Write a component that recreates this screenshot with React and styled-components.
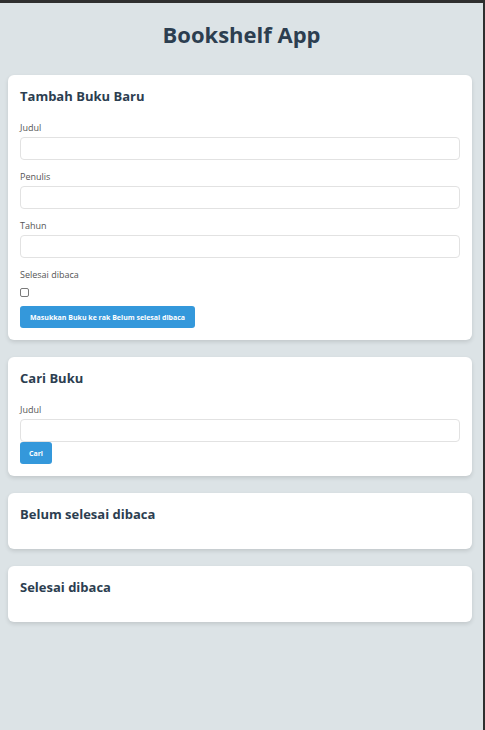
import React from "react";
import styled, { createGlobalStyle } from "styled-components";

const Global = createGlobalStyle`
  html, body {
    margin: 0;
    padding: 0;
    background: #2f2f2f;
  }
  body {
    font-family: "Open Sans", "Noto Sans", "Liberation Sans", sans-serif;
  }
`;

const Frame = styled.div`
  min-height: 100vh;
  box-sizing: border-box;
  border-top: 3px solid #2f2f2f;
  border-right: 2px solid #2f2f2f;
  background: #dce3e6;
`;

const Header = styled.header`
  padding-top: 16px;
  margin-bottom: 26px;
`;

const AppTitle = styled.h1`
  margin: 0;
  text-align: center;
  font-size: 22px;
  line-height: 30px;
  font-weight: 700;
  color: #2c3e50;
`;

const Main = styled.main`
  display: flex;
  flex-direction: column;
  gap: 17px;
  padding: 0 11px 24px 8px;
`;

const Card = styled.section`
  background: #ffffff;
  border-radius: 6px;
  padding: 12px;
  box-shadow: 0 2px 4px rgba(0, 0, 0, 0.12);
`;

const CardTitle = styled.h2`
  margin: 0 0 ${(p) => (p.$compact ? "14px" : "16px")};
  font-size: 13px;
  line-height: 18px;
  font-weight: 700;
  color: #2c3e50;
`;

const Field = styled.div`
  margin-bottom: ${(p) => p.$gap ?? 10}px;
`;

const Label = styled.label`
  display: block;
  font-size: 9px;
  line-height: 13px;
  margin-bottom: 3px;
  color: #555;
`;

const TextInput = styled.input`
  display: block;
  width: 100%;
  box-sizing: border-box;
  height: 23px;
  margin: 0;
  padding: 0 6px;
  border: 1px solid #e2e2e2;
  border-radius: 4px;
  font-family: inherit;
  font-size: 10px;
  outline: none;
  background: #fff;
`;

const Check = styled.input`
  appearance: none;
  display: block;
  width: 9px;
  height: 9px;
  margin: 7px 0 0;
  box-sizing: border-box;
  border: 1px solid #7a7a7a;
  border-radius: 2px;
  background: #fff;
`;

const Button = styled.button`
  display: block;
  height: 22px;
  padding: 0 ${(p) => (p.$tight ? 9 : 10)}px;
  border: none;
  border-radius: 3px;
  background: #3498db;
  color: #fff;
  font-family: inherit;
  font-size: 7px;
  font-weight: 700;
  cursor: pointer;
`;

const BookList = styled.div``;

export default function App() {
  return (
    <>
      <Global />
      <Frame>
        <Header>
          <AppTitle>Bookshelf App</AppTitle>
        </Header>
        <Main>
          <Card>
            <CardTitle>Tambah Buku Baru</CardTitle>
            <form onSubmit={(e) => e.preventDefault()}>
              <Field>
                <Label htmlFor="bookFormTitle">Judul</Label>
                <TextInput id="bookFormTitle" type="text" />
              </Field>
              <Field>
                <Label htmlFor="bookFormAuthor">Penulis</Label>
                <TextInput id="bookFormAuthor" type="text" />
              </Field>
              <Field>
                <Label htmlFor="bookFormYear">Tahun</Label>
                <TextInput id="bookFormYear" type="number" />
              </Field>
              <Field $gap={9}>
                <Label htmlFor="bookFormIsComplete">Selesai dibaca</Label>
                <Check id="bookFormIsComplete" type="checkbox" />
              </Field>
              <Button type="submit">Masukkan Buku ke rak Belum selesai dibaca</Button>
            </form>
          </Card>
          <Card>
            <CardTitle>Cari Buku</CardTitle>
            <form onSubmit={(e) => e.preventDefault()}>
              <Field $gap={0}>
                <Label htmlFor="searchBookTitle">Judul</Label>
                <TextInput id="searchBookTitle" type="text" />
              </Field>
              <Button type="submit" $tight>Cari</Button>
            </form>
          </Card>
          <Card>
            <CardTitle $compact>Belum selesai dibaca</CardTitle>
            <BookList />
          </Card>
          <Card>
            <CardTitle $compact>Selesai dibaca</CardTitle>
            <BookList />
          </Card>
        </Main>
      </Frame>
    </>
  );
}
